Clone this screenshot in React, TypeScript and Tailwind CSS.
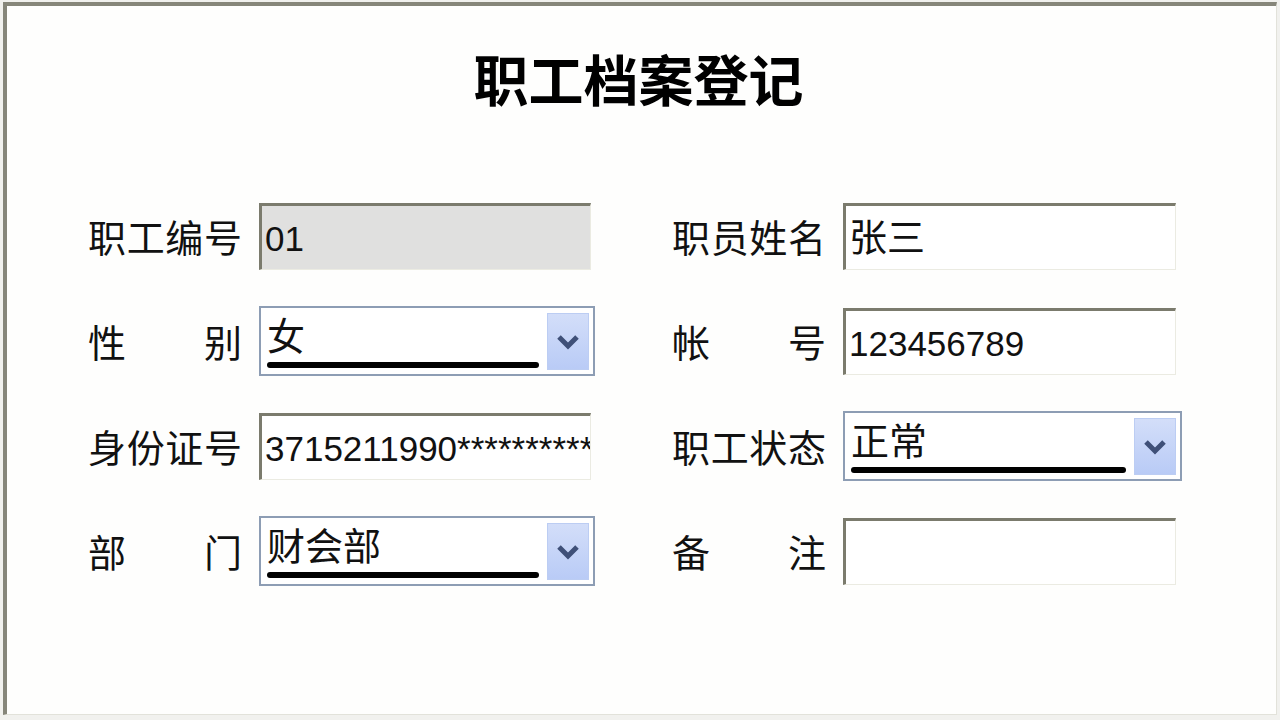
import React from 'react';

const cjk = { fontFamily: '"Noto Sans CJK SC", sans-serif' };
const valueFont = { fontFamily: '"Liberation Sans", "Noto Sans CJK SC", sans-serif' };

function Label({ text }: { text: string }) {
  return (
    <div className="flex w-[154px] shrink-0 justify-between text-[38px] leading-none text-[#111]" style={cjk}>
      {text.split('').map((ch, i) => (
        <span key={i}>{ch}</span>
      ))}
    </div>
  );
}

function TextBox({ value, width, disabled, size = 'text-[38px]' }: { value: string; width: string; disabled?: boolean; size?: string }) {
  return (
    <div
      className={`flex h-[67px] ${width} items-center overflow-hidden whitespace-nowrap border-t-[3px] border-l-[3px] border-r border-b border-t-[#7b7b6d] border-l-[#7b7b6d] border-r-[#ebebe2] border-b-[#ebebe2] pl-[3px] pt-[2px] leading-none text-[#111] ${size} ${disabled ? 'bg-[#e0e0df]' : 'bg-white'}`}
      style={valueFont}
    >
      {value}
    </div>
  );
}

function Chevron() {
  return (
    <svg width="24" height="18" viewBox="0 0 24 18">
      <path d="M3 4 L12 13 L21 4" fill="none" stroke="#3f5078" strokeWidth="5" strokeLinejoin="miter" />
    </svg>
  );
}

function Select({ value, width }: { value: string; width: string }) {
  return (
    <div className={`flex h-[70px] ${width} items-stretch border-2 border-[#8d9db4] bg-white pl-[6px] pr-[4px] pt-[5px] pb-[4px]`}>
      <div className="flex flex-1 flex-col justify-end pb-[2px] pr-[8px]">
        <div className="text-[38px] leading-none text-[#111]" style={valueFont}>
          {value}
        </div>
        <div className="mt-[6px] h-[6px] w-full rounded-full bg-black" />
      </div>
      <div className="flex w-[42px] items-center justify-center border border-[#bccdf3] bg-gradient-to-b from-[#d3def9] to-[#b9cbf6]">
        <Chevron />
      </div>
    </div>
  );
}

function Row({ children }: { children: React.ReactNode }) {
  return <div className="flex h-[70px] items-center gap-[17px]">{children}</div>;
}

export default function App() {
  return (
    <div className="h-[720px] w-[1280px] overflow-hidden bg-[#f1f1ee]">
      <div className="ml-[3px] mt-[2px] flex h-[713px] w-[1274px] flex-col border-t-4 border-l-4 border-r border-b border-t-[#86867a] border-l-[#86867a] border-r-[#e2e2da] border-b-[#e2e2da] bg-[#fefefd]">
        <h1 className="mt-[44px] pr-[6px] text-center text-[55px] font-bold leading-none text-black" style={cjk}>
          职工档案登记
        </h1>
        <div className="mt-[96px] grid grid-cols-[584px_auto] gap-y-[35px] pl-[81px]">
          <Row>
            <Label text="职工编号" />
            <TextBox value="01" width="w-[332px]" disabled size="text-[35px]" />
          </Row>
          <Row>
            <Label text="职员姓名" />
            <TextBox value="张三" width="w-[333px]" />
          </Row>
          <Row>
            <Label text="性别" />
            <Select value="女" width="w-[336px]" />
          </Row>
          <Row>
            <Label text="帐号" />
            <TextBox value="123456789" width="w-[333px]" size="text-[35px]" />
          </Row>
          <Row>
            <Label text="身份证号" />
            <TextBox value="3715211990************" width="w-[332px]" size="text-[35px]" />
          </Row>
          <Row>
            <Label text="职工状态" />
            <Select value="正常" width="w-[339px]" />
          </Row>
          <Row>
            <Label text="部门" />
            <Select value="财会部" width="w-[336px]" />
          </Row>
          <Row>
            <Label text="备注" />
            <TextBox value="" width="w-[333px]" />
          </Row>
        </div>
      </div>
    </div>
  );
}
